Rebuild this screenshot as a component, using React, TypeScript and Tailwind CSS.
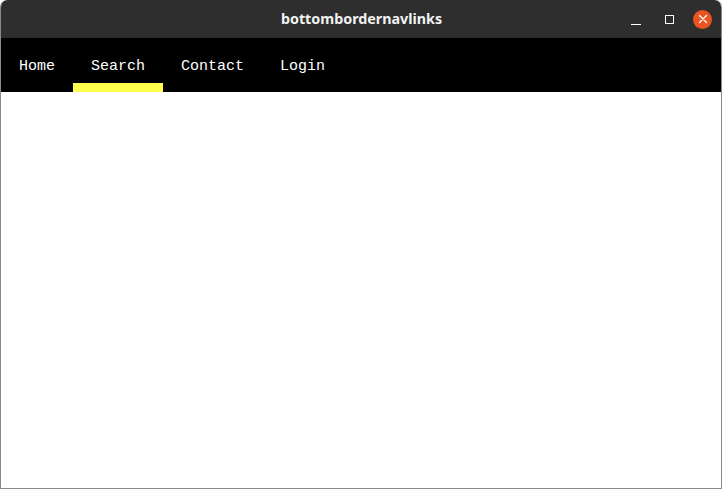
import React from "react";

export default function App() {
  const links = ["Home", "Search", "Contact", "Login"];
  return (
    <div className="w-[722px] h-[489px] bg-white flex flex-col overflow-hidden rounded-t-[7px] border border-t-0 border-[#8a8a8a]">
      <div className="h-[38px] shrink-0 bg-[#2e2e2e] flex items-center relative rounded-t-[7px] -mx-px px-px">
        <div className="flex-1 text-center text-[#f2f2f2] text-[14.3px] font-bold font-['Noto_Sans','Open_Sans',sans-serif] pl-[1px]">
          bottombordernavlinks
        </div>
        <div className="absolute right-[10px] top-0 h-[38px] flex items-center">
          <div className="w-[10px] h-[1px] bg-white mt-[10px]"></div>
          <div className="w-[9px] h-[9px] border border-white ml-[24px]"></div>
          <div className="w-[19px] h-[19px] ml-[19px] rounded-full bg-[#e95420] flex items-center justify-center">
            <svg width="10" height="10" viewBox="0 0 10 10">
              <path d="M1.5 1.5 L8.5 8.5 M8.5 1.5 L1.5 8.5" stroke="white" strokeWidth="1.4" strokeLinecap="round" />
            </svg>
          </div>
        </div>
      </div>
      <div className="h-[54px] shrink-0 bg-black flex">
        {links.map((l) => (
          <div
            key={l}
            className={
              l === "Search"
                ? "h-full px-[18px] pt-[19px] border-b-[9px] border-[#ffff4d] text-white text-[15px] leading-[20px] font-['Liberation_Mono',monospace]"
                : "h-full px-[18px] pt-[19px] border-b-[9px] border-black text-white text-[15px] leading-[20px] font-['Liberation_Mono',monospace]"
            }
          >
            {l}
          </div>
        ))}
      </div>
      <div className="flex-1 bg-white"></div>
    </div>
  );
}
